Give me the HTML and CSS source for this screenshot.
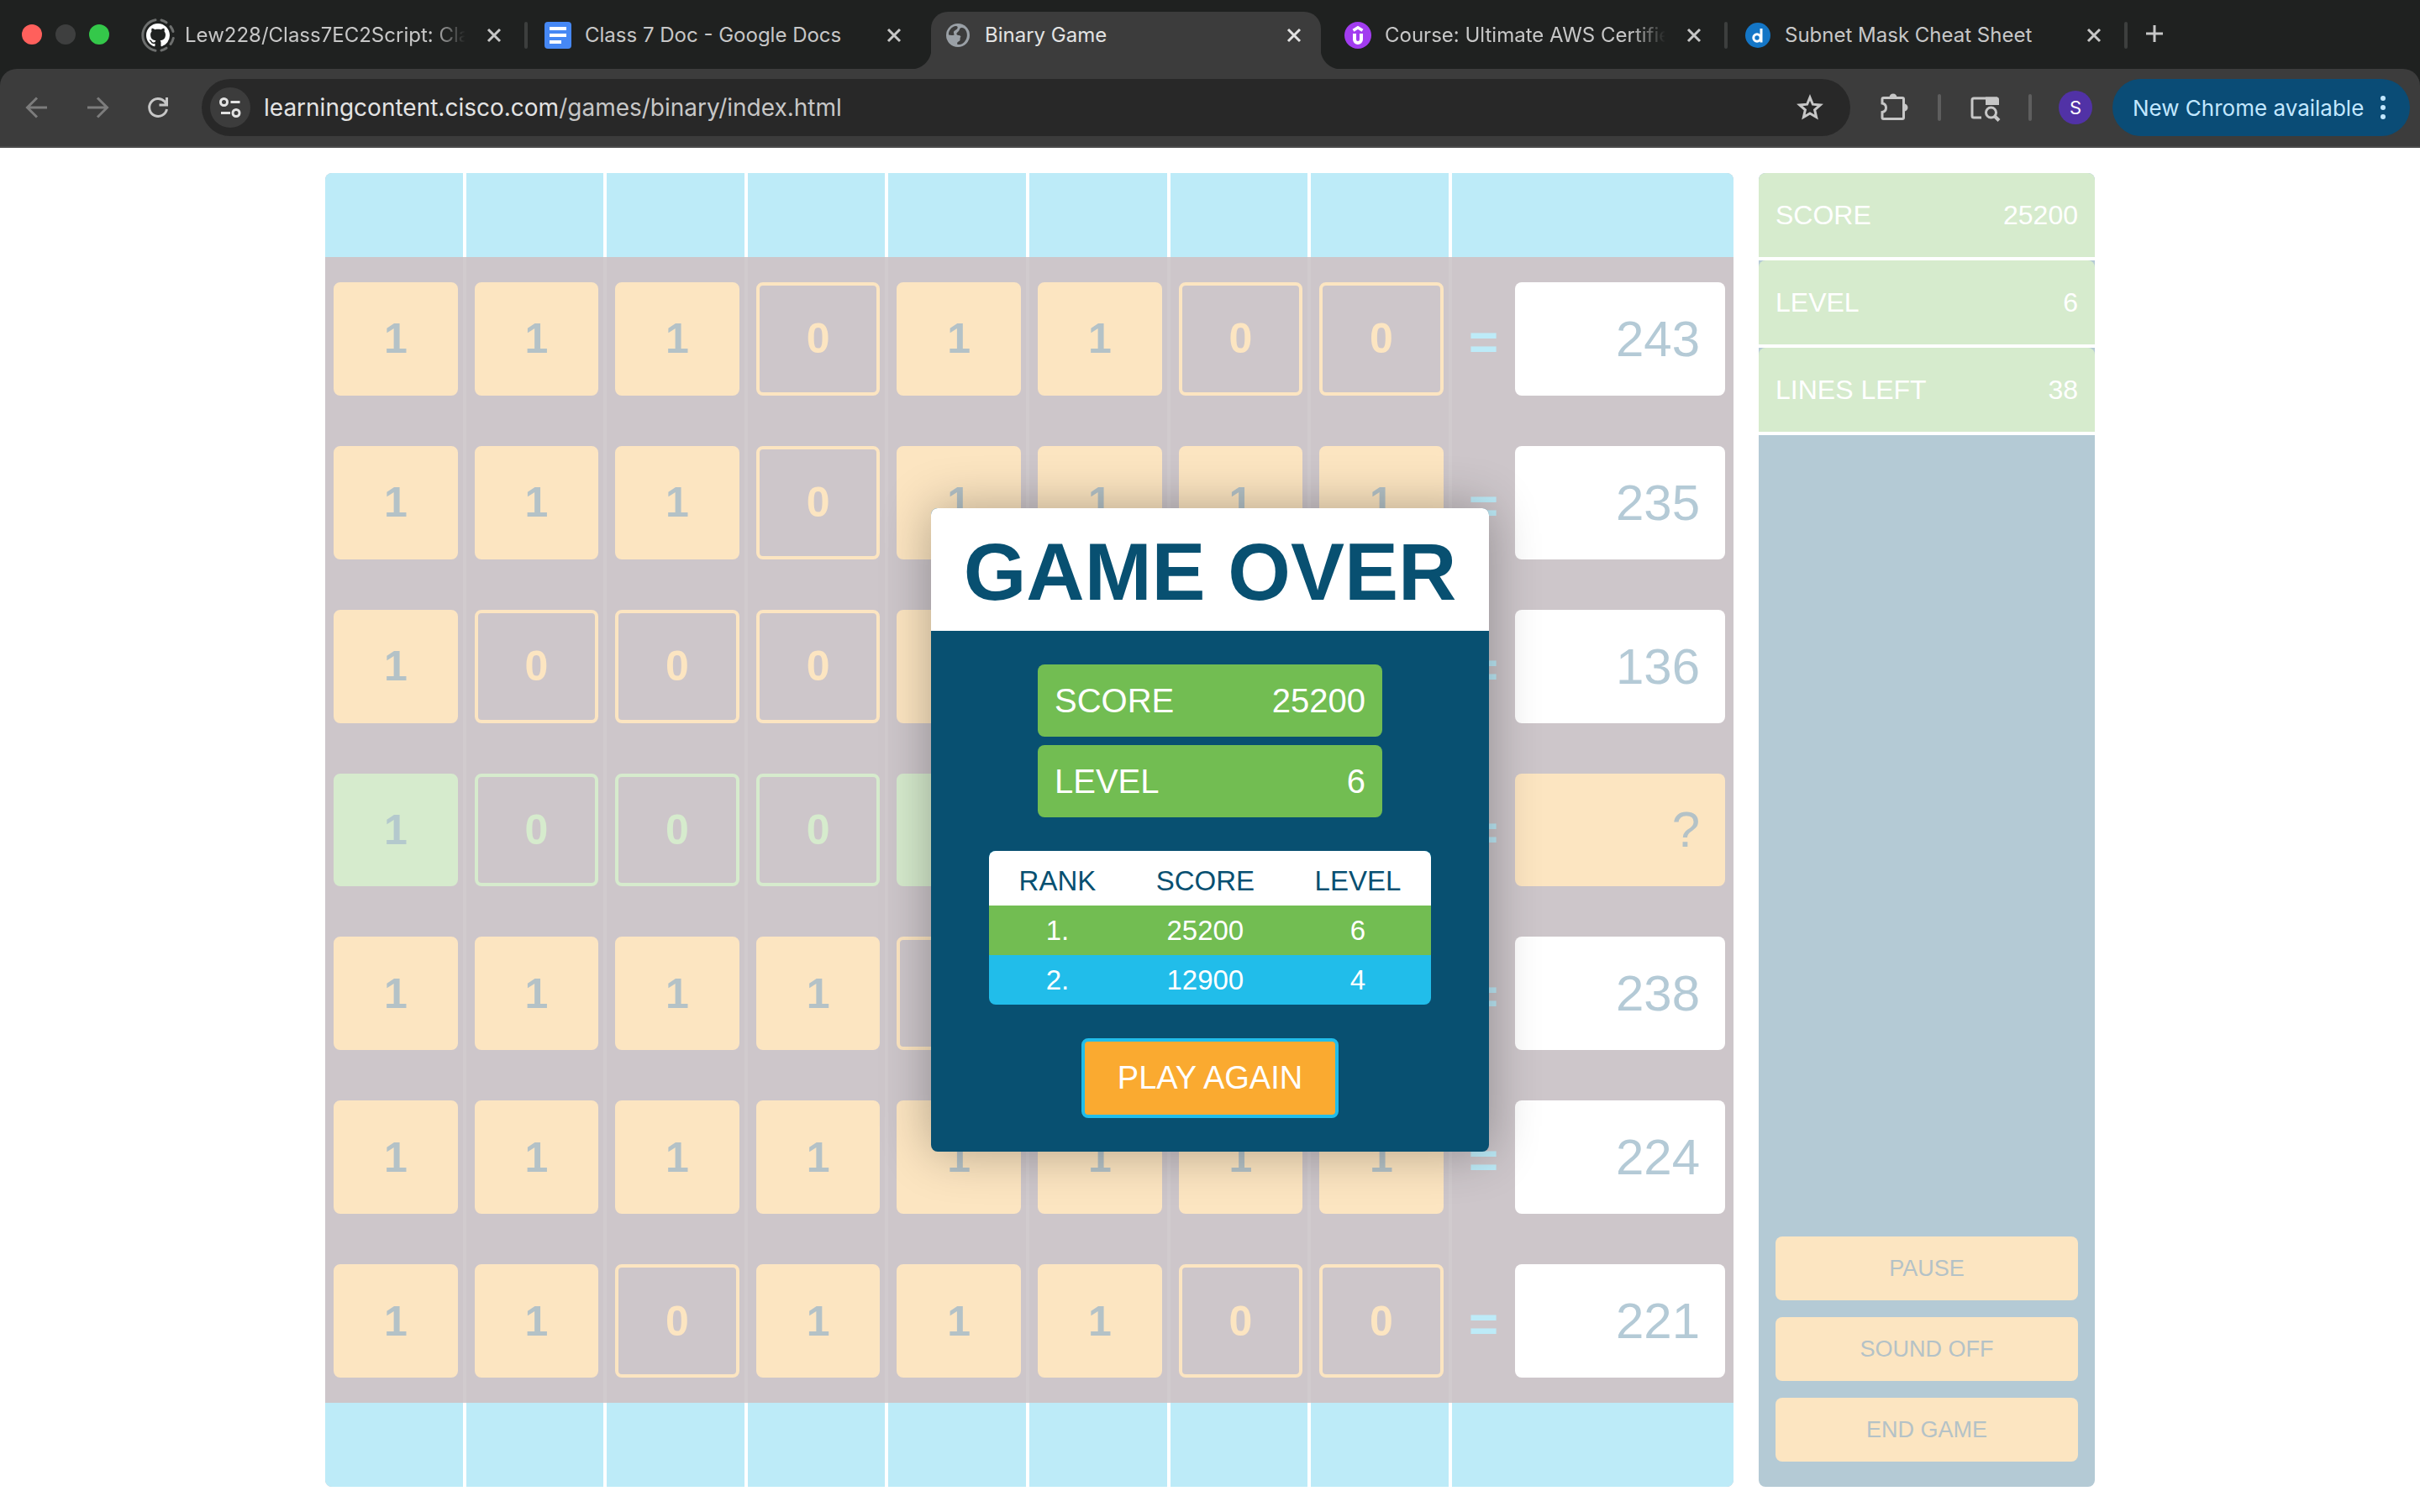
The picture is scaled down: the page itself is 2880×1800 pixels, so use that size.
FILE: index.html
```html
<!DOCTYPE html>
<html lang="en">
<head>
<meta charset="utf-8">
<title>Binary Game</title>
<link rel="stylesheet" href="styles.css">
</head>
<body>
<header class="browser">
  <div class="tab-strip">
    <div class="lights"><span class="light light-close"></span><span class="light light-min"></span><span class="light light-max"></span></div>
    <div class="tab">
      <svg class="tab-icon" viewBox="0 0 32 32"><g fill="none" stroke="#6d6f6e" stroke-width="3" stroke-linecap="round"><path d="M13 -2.200A18.500 18.500 0 0 0 13 34.200"/><path d="M20 -2A18.500 18.500 0 0 1 26 .8M31 5.500A18.500 18.500 0 0 1 34 11.500M34.300 19.500A18.500 18.500 0 0 1 31 26.500M26 31.200A18.500 18.500 0 0 1 20 34"/></g><path fill="#fff" transform="translate(2 2) scale(1.750)" d="M8 0C3.58 0 0 3.58 0 8c0 3.54 2.29 6.53 5.47 7.59.4.07.55-.17.55-.38 0-.19-.01-.82-.01-1.49-2.01.37-2.53-.49-2.69-.94-.09-.23-.48-.94-.82-1.13-.28-.15-.68-.52-.01-.53.63-.01 1.08.58 1.23.82.72 1.21 1.87.87 2.33.66.07-.52.28-.87.51-1.07-1.78-.2-3.64-.89-3.64-3.95 0-.87.31-1.59.82-2.15-.08-.2-.36-1.02.08-2.12 0 0 .67-.21 2.2.82.64-.18 1.32-.27 2-.27.68 0 1.36.09 2 .27 1.53-1.04 2.2-.82 2.2-.82.44 1.1.16 1.92.08 2.12.51.56.82 1.27.82 2.15 0 3.07-1.87 3.75-3.65 3.95.29.25.54.73.54 1.48 0 1.07-.01 1.93-.01 2.2 0 .21.15.46.55.38A8.013 8.013 0 0016 8c0-4.42-3.580-8-8-8z"/></svg>
      <span class="tab-title fade">Lew228/Class7EC2Script: Class 7</span>
      <button class="tab-close" aria-label="Close tab"><svg viewBox="0 0 24 24"><path d="M5 5l14 14M19 5L5 19"/></svg></button>
    </div>
    <div class="tab before-active">
      <svg class="tab-icon" viewBox="0 0 32 32"><rect width="32" height="32" rx="4" fill="#4688f4"/><path fill="#fff" d="M6 6h20v4H6zM6 14h20v4H6zM6 22h14v4H6z"/></svg>
      <span class="tab-title">Class 7 Doc - Google Docs</span>
      <button class="tab-close" aria-label="Close tab"><svg viewBox="0 0 24 24"><path d="M5 5l14 14M19 5L5 19"/></svg></button>
    </div>
    <div class="tab active">
      <svg class="tab-icon" viewBox="0 0 32 32"><circle cx="16" cy="16" r="14" fill="#9aa0a6"/><path fill="#3c3c3c" d="M5 15.500C4.500 11 8 6 13 5c2.500-.4 3.500 1.500 2 3.500L11.500 11c-1.500 2 .5 3.500 0 4.500-2 .8-4.500.5-6.500 0zM18 8.500c2-2.500 5.500-1.500 7 1 3.500 5.500 2 12-3 16-2 1.400-4.500 1.800-6.500 1.500-1-2 0-3.200 2-4 2.200-1.200 0-3 2-5.500-1-2-3-.5-5-2.500-.8-2.500 3-3 3.500-6.500z"/></svg>
      <span class="tab-title">Binary Game</span>
      <button class="tab-close" aria-label="Close tab"><svg viewBox="0 0 24 24"><path d="M5 5l14 14M19 5L5 19"/></svg></button>
    </div>
    <div class="tab">
      <svg class="tab-icon" viewBox="0 0 32 32"><circle cx="16" cy="16" r="16" fill="#a23cf0"/><g fill="none" stroke="#fff" stroke-width="3.500"><path d="M10.500 10.200L16 6.800l5.500 3.400"/><path stroke-width="4" d="M12 14v7a4 4 0 0 0 8 0v-7"/></g></svg>
      <span class="tab-title fade">Course: Ultimate AWS Certified</span>
      <button class="tab-close" aria-label="Close tab"><svg viewBox="0 0 24 24"><path d="M5 5l14 14M19 5L5 19"/></svg></button>
    </div>
    <div class="tab">
      <svg class="tab-icon" viewBox="0 0 32 32"><circle cx="16" cy="16" r="15" fill="#1476c6"/><g fill="none" stroke="#fff" stroke-width="3"><circle cx="15" cy="19" r="4.200"/><path d="M20 8v16.500"/></g></svg>
      <span class="tab-title">Subnet Mask Cheat Sheet</span>
      <button class="tab-close" aria-label="Close tab"><svg viewBox="0 0 24 24"><path d="M5 5l14 14M19 5L5 19"/></svg></button>
    </div>
    <button class="new-tab" aria-label="New tab"><svg viewBox="0 0 24 24"><path d="M2 12h20M12 2v20"/></svg></button>
  </div>
  <div class="toolbar">
    <nav class="nav-buttons">
      <button class="icon-button dim" aria-label="Back"><svg viewBox="0 0 48 48"><path d="M36 24H13M24 12.500L12.500 24 24 35.500"/></svg></button>
      <button class="icon-button dim" aria-label="Forward"><svg viewBox="0 0 48 48"><path d="M12 24h23M24 12.500L35.500 24 24 35.500"/></svg></button>
      <button class="icon-button" aria-label="Reload"><svg viewBox="0 0 48 48"><path d="M34.500 26a10.500 10.500 0 1 1-2.600-9.200l1.600 2.200M34.500 12v9h-9"/></svg></button>
    </nav>
    <div class="omnibox">
      <button class="site-info" aria-label="Site information"><svg viewBox="0 0 48 48"><circle cx="16.500" cy="17.500" r="4"/><path d="M24.500 17.500h11M13 30.500h11"/><circle cx="31" cy="30.500" r="4"/></svg></button>
      <div class="url"><span class="host">learningcontent.cisco.com</span>/games/binary/index.html</div>
      <button class="icon-button" aria-label="Bookmark"><svg viewBox="0 0 48 48"><path d="M24 12l3.400 8.200 8.900.8-6.700 5.800 2 8.700L24 30.900l-7.600 4.600 2-8.700-6.700-5.800 8.900-.8z"/></svg></button>
    </div>
    <div class="actions">
      <button class="icon-button" aria-label="Extensions"><svg viewBox="0 0 48 48"><path d="M11.500 12.500H34a1.500 1.500 0 0 1 1.500 1.500v22a1.500 1.500 0 0 1-1.500 1.500H11.500a1.500 1.500 0 0 1-1.500-1.500v-6.500c6-1 6-9.500 0-10.500V14a1.500 1.500 0 0 1 1.500-1.500z"/><path fill="currentColor" stroke="none" d="M18.500 12a4.500 4.500 0 0 1 9 0zM36 19.500a4.500 4.500 0 0 1 0 9z"/></svg></button>
      <span class="divider"></span>
      <button class="icon-button" aria-label="Search tabs"><svg viewBox="0 0 48 48"><path d="M20 36h-9a2 2 0 0 1-2-2V15a2 2 0 0 1 2-2h28"/><path fill="currentColor" stroke="none" d="M25 11.500h13a3 3 0 0 1 3 3V21H25z"/><circle cx="31.500" cy="30" r="6"/><path stroke-width="4" d="M36 34.500l5 5"/></svg></button>
      <span class="divider"></span>
      <div class="account">
        <button class="avatar" aria-label="Profile">S</button>
        <button class="update">New Chrome available <svg viewBox="0 0 8 32"><circle cx="4" cy="5" r="3"/><circle cx="4" cy="16" r="3"/><circle cx="4" cy="27" r="3"/></svg></button>
      </div>
    </div>
  </div>
</header>

<main class="page">
  <div class="game">
    <section class="board">
      <div class="row band"><i></i><i></i><i></i><i></i><i></i><i></i><i></i><i></i><i></i></div>
      <div class="row">
        <div class="cell"><button class="bit on">1</button></div><div class="cell"><button class="bit on">1</button></div><div class="cell"><button class="bit on">1</button></div><div class="cell"><button class="bit">0</button></div><div class="cell"><button class="bit on">1</button></div><div class="cell"><button class="bit on">1</button></div><div class="cell"><button class="bit">0</button></div><div class="cell"><button class="bit">0</button></div>
        <div class="cell result"><span class="equals">=</span><div class="answer">243</div></div>
      </div>
      <div class="row">
        <div class="cell"><button class="bit on">1</button></div><div class="cell"><button class="bit on">1</button></div><div class="cell"><button class="bit on">1</button></div><div class="cell"><button class="bit">0</button></div><div class="cell"><button class="bit on">1</button></div><div class="cell"><button class="bit on">1</button></div><div class="cell"><button class="bit on">1</button></div><div class="cell"><button class="bit on">1</button></div>
        <div class="cell result"><span class="equals">=</span><div class="answer">235</div></div>
      </div>
      <div class="row">
        <div class="cell"><button class="bit on">1</button></div><div class="cell"><button class="bit">0</button></div><div class="cell"><button class="bit">0</button></div><div class="cell"><button class="bit">0</button></div><div class="cell"><button class="bit on">1</button></div><div class="cell"><button class="bit">0</button></div><div class="cell"><button class="bit">0</button></div><div class="cell"><button class="bit">0</button></div>
        <div class="cell result"><span class="equals">=</span><div class="answer">136</div></div>
      </div>
      <div class="row solving">
        <div class="cell"><button class="bit on">1</button></div><div class="cell"><button class="bit">0</button></div><div class="cell"><button class="bit">0</button></div><div class="cell"><button class="bit">0</button></div><div class="cell"><button class="bit on">1</button></div><div class="cell"><button class="bit">0</button></div><div class="cell"><button class="bit">0</button></div><div class="cell"><button class="bit">0</button></div>
        <div class="cell result"><span class="equals">=</span><button class="answer">?</button></div>
      </div>
      <div class="row">
        <div class="cell"><button class="bit on">1</button></div><div class="cell"><button class="bit on">1</button></div><div class="cell"><button class="bit on">1</button></div><div class="cell"><button class="bit on">1</button></div><div class="cell"><button class="bit">0</button></div><div class="cell"><button class="bit on">1</button></div><div class="cell"><button class="bit on">1</button></div><div class="cell"><button class="bit">0</button></div>
        <div class="cell result"><span class="equals">=</span><div class="answer">238</div></div>
      </div>
      <div class="row">
        <div class="cell"><button class="bit on">1</button></div><div class="cell"><button class="bit on">1</button></div><div class="cell"><button class="bit on">1</button></div><div class="cell"><button class="bit on">1</button></div><div class="cell"><button class="bit on">1</button></div><div class="cell"><button class="bit on">1</button></div><div class="cell"><button class="bit on">1</button></div><div class="cell"><button class="bit on">1</button></div>
        <div class="cell result"><span class="equals">=</span><div class="answer">224</div></div>
      </div>
      <div class="row">
        <div class="cell"><button class="bit on">1</button></div><div class="cell"><button class="bit on">1</button></div><div class="cell"><button class="bit">0</button></div><div class="cell"><button class="bit on">1</button></div><div class="cell"><button class="bit on">1</button></div><div class="cell"><button class="bit on">1</button></div><div class="cell"><button class="bit">0</button></div><div class="cell"><button class="bit">0</button></div>
        <div class="cell result"><span class="equals">=</span><div class="answer">221</div></div>
      </div>
      <div class="row band"><i></i><i></i><i></i><i></i><i></i><i></i><i></i><i></i><i></i></div>
    </section>
    <aside class="side">
      <div class="stat"><div class="stat-inner"><span>SCORE</span><span>25200</span></div></div>
      <div class="stat"><div class="stat-inner"><span>LEVEL</span><span>6</span></div></div>
      <div class="stat"><div class="stat-inner"><span>LINES LEFT</span><span>38</span></div></div>
      <div class="controls">
        <button class="control">PAUSE</button>
        <button class="control">SOUND OFF</button>
        <button class="control">END GAME</button>
      </div>
    </aside>
  </div>

  <div class="overlay">
    <section class="dialog" role="dialog" aria-labelledby="dialog-title">
      <h1 class="dialog-title" id="dialog-title">GAME OVER</h1>
      <div class="dialog-body">
        <div class="totals">
          <div class="total"><span>SCORE</span><span>25200</span></div>
          <div class="total"><span>LEVEL</span><span>6</span></div>
        </div>
        <table class="ranks">
          <thead><tr><th>RANK</th><th>SCORE</th><th>LEVEL</th></tr></thead>
          <tbody>
            <tr class="current"><td>1.</td><td>25200</td><td>6</td></tr>
            <tr><td>2.</td><td>12900</td><td>4</td></tr>
          </tbody>
        </table>
        <button class="again">PLAY AGAIN</button>
      </div>
    </section>
  </div>
</main>
</body>
</html>
```
FILE: styles.css
```css
* { box-sizing: border-box; }

body {
  margin: 0;
  min-height: 100vh;
  display: flex;
  flex-direction: column;
  background: #fff;
  font-family: "Liberation Sans", Arial, sans-serif;
}

button {
  margin: 0;
  padding: 0;
  border: 0;
  background: none;
  color: inherit;
  font: inherit;
  cursor: pointer;
}

svg { display: block; overflow: visible; }

/* Browser frame */
.browser {
  background: #1f2120;
  color: #c7c7c7;
  font-family: Inter, "Noto Sans", sans-serif;
}

.tab-strip { display: flex; height: 82px; }

.lights {
  display: flex;
  flex: none;
  align-items: center;
  gap: 16px;
  width: 150px;
  padding-left: 26px;
}
.light { width: 24px; height: 24px; border-radius: 50%; }
.light-close { background: #ff605c; }
.light-min { background: #3e3f3f; }
.light-max { background: #34c84a; }

.tab {
  position: relative;
  display: flex;
  align-items: center;
  flex: 0 1 476px;
  min-width: 0;
  margin-top: 14px;
  padding: 0 26px 12px 22px;
}
.tab::after {
  content: "";
  position: absolute;
  right: -2px;
  top: 12px;
  width: 4px;
  height: 32px;
  border-radius: 2px;
  background: #3d3f3e;
}
.tab.before-active::after { display: none; }
.tab-icon { flex: none; width: 32px; height: 32px; margin-right: 16px; }
.tab-title {
  flex: 1;
  min-width: 0;
  margin-right: 22px;
  overflow: hidden;
  white-space: nowrap;
  font-size: 24px;
  line-height: 32px;
}
.fade {
  -webkit-mask-image: linear-gradient(to left, transparent, #000 40px);
  mask-image: linear-gradient(to left, transparent, #000 40px);
}
.tab-close { flex: none; width: 24px; height: 24px; }
.tab-close svg, .new-tab svg {
  width: 24px;
  height: 24px;
  fill: none;
  stroke: currentColor;
  stroke-width: 3;
}
.new-tab { width: 68px; padding: 0 22px 2px; }

.active { color: #e3e3e3; isolation: isolate; }
.active::before {
  content: "";
  position: absolute;
  z-index: -1;
  inset: 0 6px;
  border-radius: 20px 20px 0 0;
  background: #3c3c3c;
}
.active::after {
  z-index: -2;
  left: -18px;
  right: -18px;
  top: auto;
  bottom: 0;
  width: auto;
  height: 24px;
  border-radius: 0;
  background:
    radial-gradient(circle at 0 0, transparent 24px, #3c3c3c 25px) left / 24px 24px no-repeat,
    radial-gradient(circle at 100% 0, transparent 24px, #3c3c3c 25px) right / 24px 24px no-repeat;
}

.toolbar {
  display: flex;
  align-items: center;
  gap: 28px;
  height: 94px;
  padding: 0 12px 0 20px;
  border-bottom: 2px solid #4a4a4a;
  border-radius: 20px 20px 0 0;
  background: #3c3c3c;
}
.nav-buttons { display: flex; gap: 24px; }
.icon-button { flex: none; width: 48px; height: 48px; }
.icon-button svg, .site-info svg {
  width: 48px;
  height: 48px;
  fill: none;
  stroke: currentColor;
  stroke-width: 3;
}
.dim { color: #7c7c7c; }

.omnibox {
  display: flex;
  align-items: center;
  flex: 1;
  min-width: 0;
  height: 68px;
  padding: 0 24px 0 10px;
  border-radius: 34px;
  background: #282828;
}
.site-info {
  flex: none;
  width: 48px;
  height: 48px;
  margin-right: 16px;
  border-radius: 50%;
  background: #3c3c3c;
  color: #e3e3e3;
}
.url {
  flex: 1;
  overflow: hidden;
  white-space: nowrap;
  font-size: 28px;
  line-height: 40px;
}
.host { color: #e3e3e3; }

.actions { display: flex; align-items: center; gap: 28px; }
.divider { width: 4px; height: 32px; border-radius: 2px; background: #5e5e5e; }
.account { display: flex; align-items: center; gap: 24px; padding-left: 4px; }
.avatar {
  width: 40px;
  height: 40px;
  border-radius: 50%;
  background: #5132a6;
  color: #fff;
  font-size: 22px;
}
.update {
  display: flex;
  align-items: center;
  justify-content: space-between;
  width: 354px;
  height: 68px;
  padding: 0 28px 0 24px;
  border-radius: 34px;
  background: #0a4c76;
  color: #c2e7ff;
  font-size: 26px;
  white-space: nowrap;
}
.update svg { width: 8px; height: 32px; fill: currentColor; }

/* Game */
.page {
  position: relative;
  display: flex;
  flex: 1;
  justify-content: center;
  padding: 30px;
}
.game { display: flex; gap: 30px; width: 100%; max-width: 2106px; }

.board {
  display: grid;
  flex: 1;
  grid-template-rows: 100px repeat(7, 1fr) 100px;
  border-radius: 8px;
  overflow: hidden;
  background: #cdc6ca;
}
.row {
  display: grid;
  grid-template-columns: repeat(8, minmax(0, 1fr)) minmax(0, 2fr);
}
.band { background: #bdebf8; }
.band i { border-right: 4px solid #fff; }
.band i:last-child { border-right: 0; }
.cell {
  display: flex;
  padding: 30px 6px 30px 10px;
  border-right: 4px solid #d1cbce;
}
.result { padding-left: 0; padding-right: 10px; border-right: 0; }

.bit {
  flex: 1;
  border: 4px solid #fce5c1;
  border-radius: 8px;
  color: #fce5c1;
  font-size: 50px;
  font-weight: bold;
}
.bit.on { background: #fce5c1; color: #b4c2c7; }
.solving .bit { border-color: #d6ebcd; color: #d6ebcd; }
.solving .bit.on { background: #d6ebcd; color: #b4c9cd; }
.equals {
  flex: 1;
  align-self: center;
  padding-top: 6px;
  color: #bdebf8;
  font-size: 60px;
  font-weight: bold;
  text-align: center;
}
.answer {
  display: flex;
  align-items: center;
  justify-content: flex-end;
  width: 250px;
  padding-right: 30px;
  border-radius: 8px;
  background: #fff;
  color: #b4cad6;
  font-size: 60px;
}
.solving .answer { background: #fce5c1; color: #b4c2c7; }

.side {
  display: flex;
  flex-direction: column;
  width: 400px;
  border-radius: 8px;
  overflow: hidden;
  background: #b4cad5;
}
.stat { border-bottom: 4px solid #fff; }
.stat-inner {
  display: flex;
  align-items: center;
  justify-content: space-between;
  height: 100px;
  padding: 0 20px;
  border-radius: 8px 8px 0 0;
  background: #d6ebcd;
  color: #fff;
  font-size: 32px;
}
.controls {
  display: flex;
  flex-direction: column;
  gap: 20px;
  margin-top: auto;
  padding: 20px 20px 30px;
}
.control {
  height: 76px;
  border-radius: 8px;
  background: #fce5c1;
  color: #b4c2c7;
  font-size: 27px;
}

/* Game over dialog */
.overlay {
  position: absolute;
  inset: 0;
  display: flex;
  align-items: center;
  justify-content: center;
}
.dialog {
  border-radius: 8px;
  overflow: hidden;
  background: #085071;
  box-shadow: 0 0 60px rgba(0, 0, 0, .3);
}
.dialog-title {
  margin: 0;
  padding: 6px 39px 0;
  background: #fff;
  color: #085071;
  font-size: 96px;
  line-height: 140px;
  text-align: center;
  white-space: nowrap;
}
.dialog-body {
  display: flex;
  flex-direction: column;
  align-items: center;
  gap: 40px;
  padding: 40px;
}
.totals { display: flex; flex-direction: column; gap: 10px; }
.total {
  display: flex;
  align-items: center;
  justify-content: space-between;
  width: 410px;
  height: 86px;
  padding: 0 20px;
  border-radius: 8px;
  background: #72bd52;
  color: #fff;
  font-size: 40px;
}
.ranks {
  width: 526px;
  border-spacing: 0;
  border-radius: 8px;
  overflow: hidden;
  background: #21bdea;
  color: #fff;
  font-size: 33px;
  line-height: 39px;
  text-align: center;
}
.ranks th {
  padding: 16px 34px 10px;
  background: #fff;
  color: #085071;
  font-weight: normal;
}
.ranks td { padding: 10px 0; }
.current td { background: #72bd52; }
.again {
  width: 306px;
  height: 95px;
  border: 4px solid #21bdea;
  border-radius: 8px;
  background: #faaa30;
  color: #fff;
  font-size: 38px;
}
```
